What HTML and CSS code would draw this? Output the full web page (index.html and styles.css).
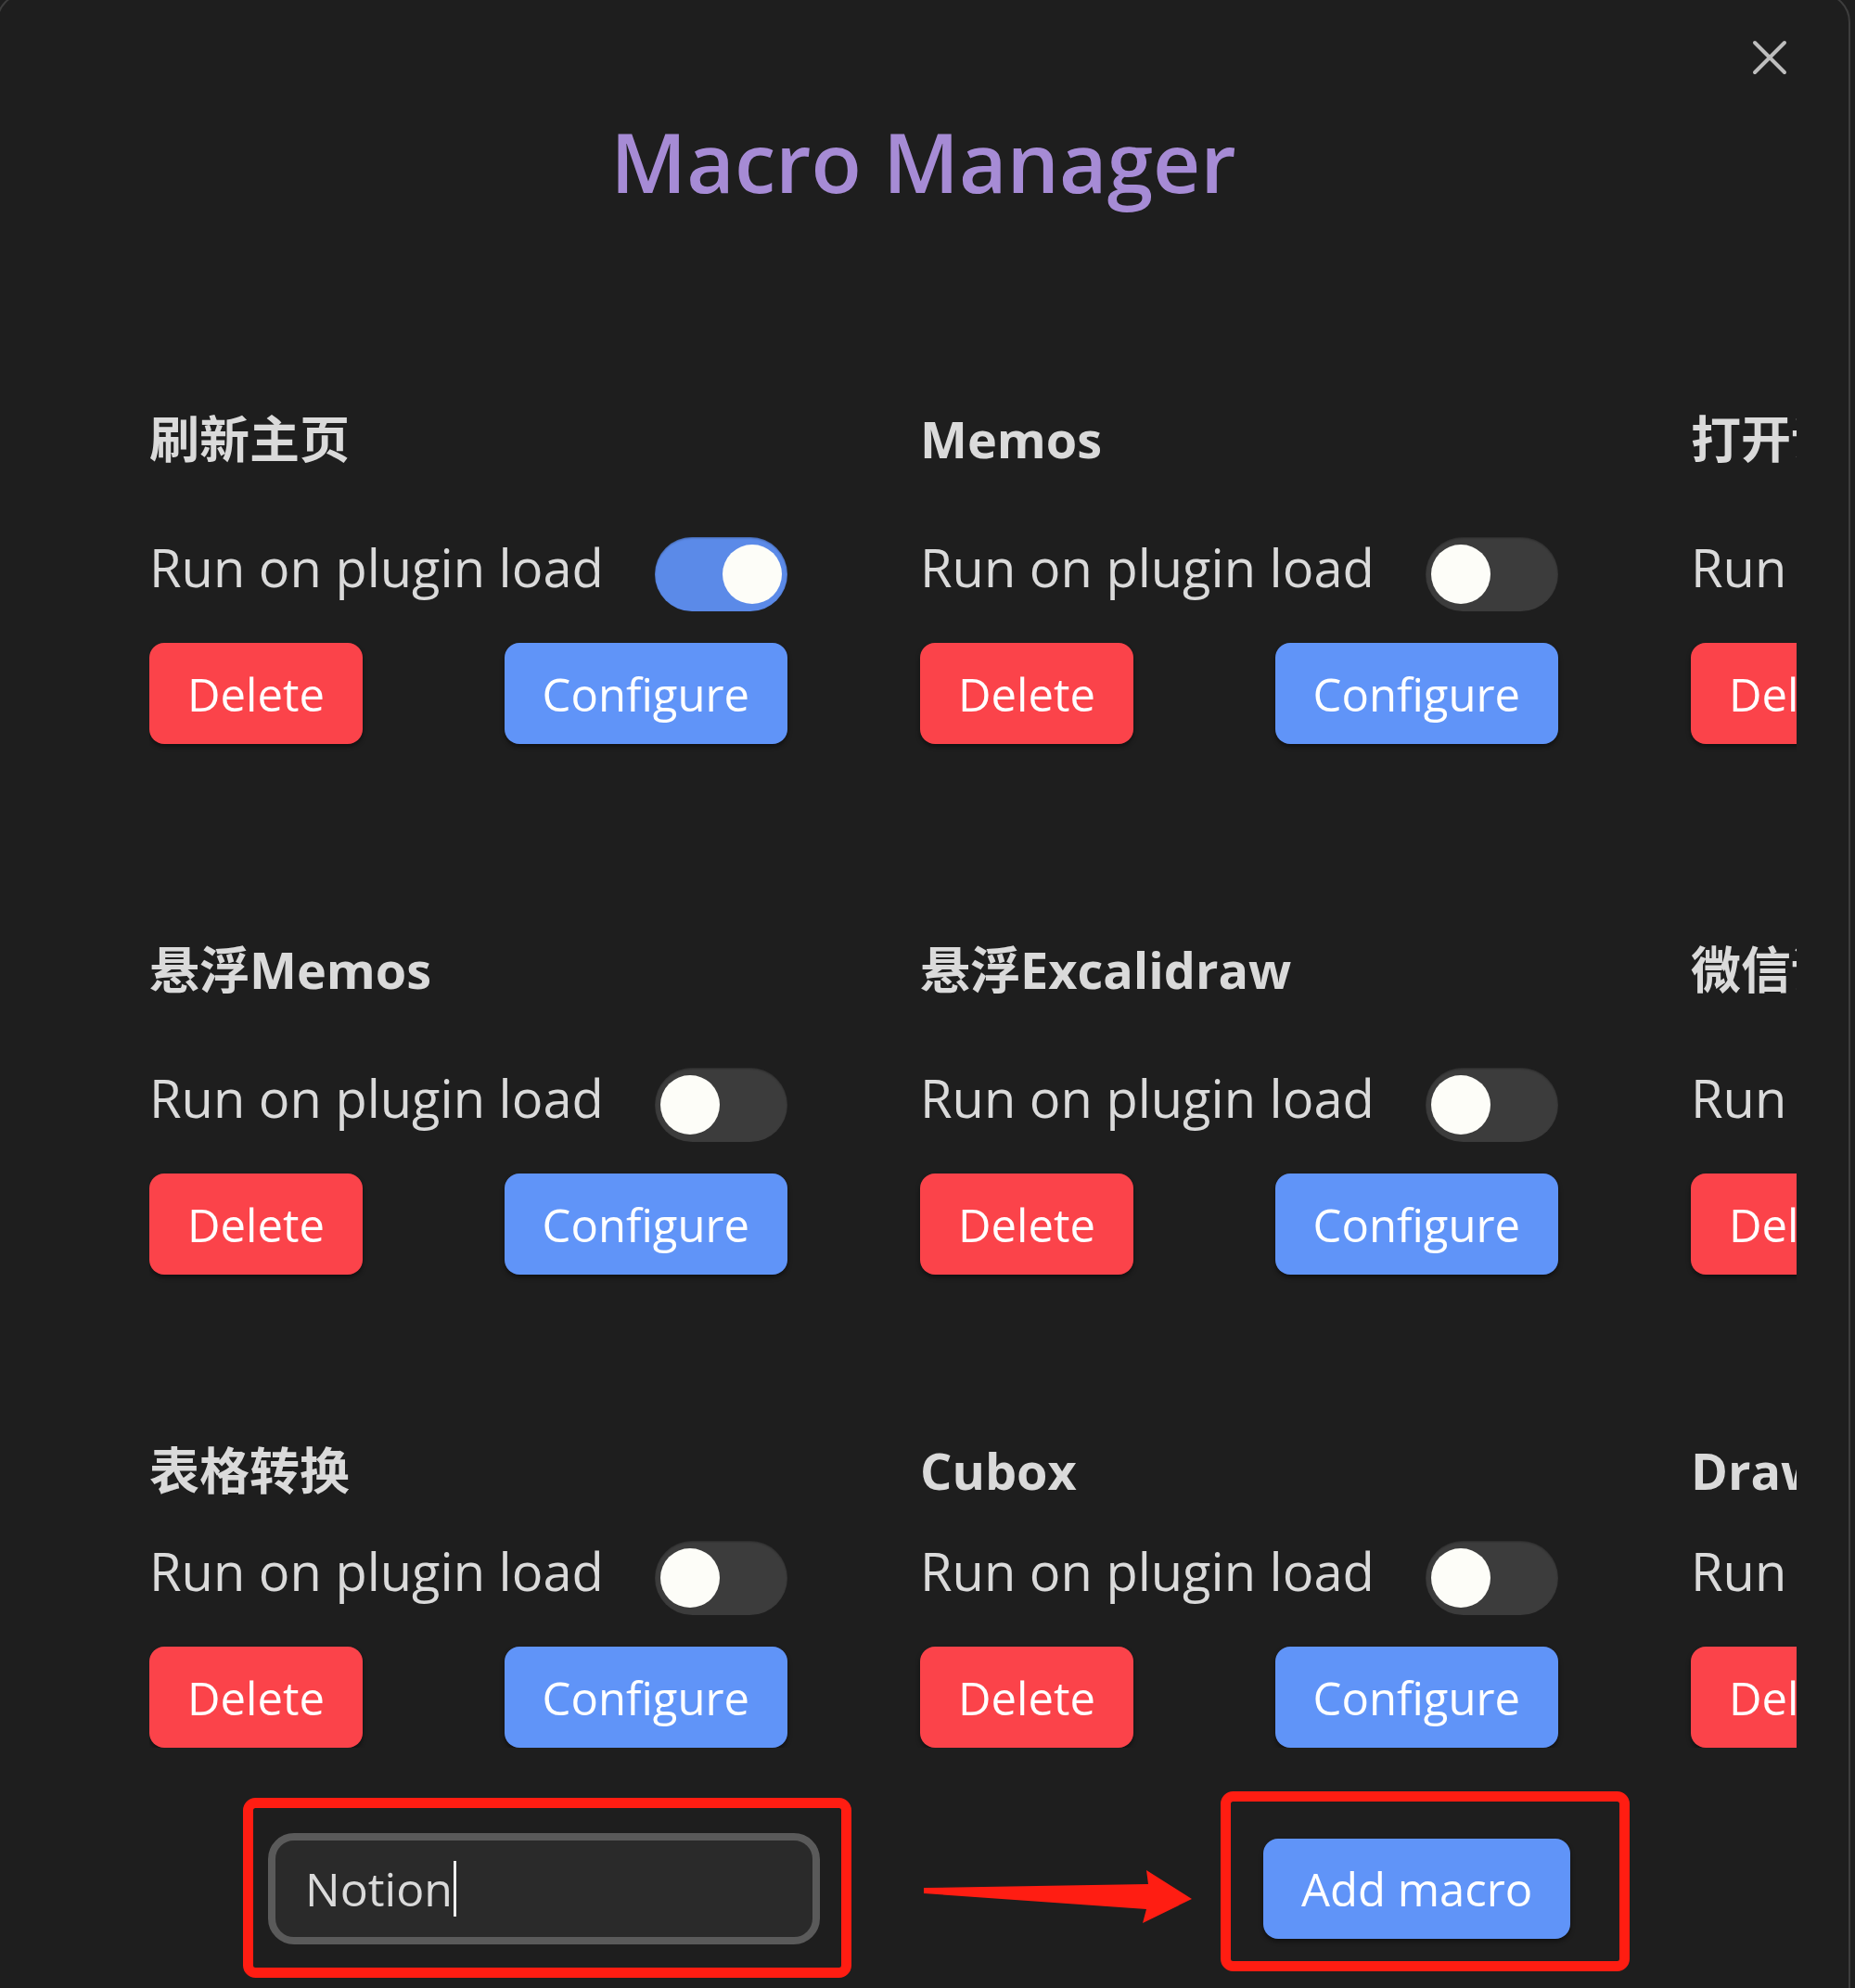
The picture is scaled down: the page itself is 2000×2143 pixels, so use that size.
FILE: index.html
```html
<!DOCTYPE html>
<html lang="zh-CN">
<head>
    <meta charset="UTF-8">
    <meta name="viewport" content="width=device-width, initial-scale=1.0">
    <title>Macro Manager</title>
    <link rel="stylesheet" href="styles.css">
</head>
<body>
    <div class="modal">
        <button class="modal-close" aria-label="Close">
            <svg width="38" height="38" viewBox="0 0 38 38">
                <path d="M3 3 L35 35 M35 3 L3 35" stroke="#bdbdbd" stroke-width="4" stroke-linecap="round" fill="none"/>
            </svg>
        </button>

        <h1 class="modal-title">Macro Manager</h1>

        <div class="macro-grid">
            <div class="macro-card">
                <div class="macro-name">刷新主页</div>
                <div class="macro-controls">
                    <div class="macro-setting">
                        <span class="macro-label">Run on plugin load</span>
                        <div class="toggle is-on"><div class="toggle-knob"></div></div>
                    </div>
                    <div class="macro-actions">
                        <button class="btn btn-delete">Delete</button>
                        <button class="btn btn-primary">Configure</button>
                    </div>
                </div>
            </div>

            <div class="macro-card">
                <div class="macro-name">Memos</div>
                <div class="macro-controls">
                    <div class="macro-setting">
                        <span class="macro-label">Run on plugin load</span>
                        <div class="toggle"><div class="toggle-knob"></div></div>
                    </div>
                    <div class="macro-actions">
                        <button class="btn btn-delete">Delete</button>
                        <button class="btn btn-primary">Configure</button>
                    </div>
                </div>
            </div>

            <div class="macro-card">
                <div class="macro-name">打开设置</div>
                <div class="macro-controls">
                    <div class="macro-setting">
                        <span class="macro-label">Run on plugin load</span>
                        <div class="toggle"><div class="toggle-knob"></div></div>
                    </div>
                    <div class="macro-actions">
                        <button class="btn btn-delete">Delete</button>
                        <button class="btn btn-primary">Configure</button>
                    </div>
                </div>
            </div>

            <div class="macro-card">
                <div class="macro-name">悬浮Memos</div>
                <div class="macro-controls">
                    <div class="macro-setting">
                        <span class="macro-label">Run on plugin load</span>
                        <div class="toggle"><div class="toggle-knob"></div></div>
                    </div>
                    <div class="macro-actions">
                        <button class="btn btn-delete">Delete</button>
                        <button class="btn btn-primary">Configure</button>
                    </div>
                </div>
            </div>

            <div class="macro-card">
                <div class="macro-name">悬浮Excalidraw</div>
                <div class="macro-controls">
                    <div class="macro-setting">
                        <span class="macro-label">Run on plugin load</span>
                        <div class="toggle"><div class="toggle-knob"></div></div>
                    </div>
                    <div class="macro-actions">
                        <button class="btn btn-delete">Delete</button>
                        <button class="btn btn-primary">Configure</button>
                    </div>
                </div>
            </div>

            <div class="macro-card">
                <div class="macro-name">微信读书</div>
                <div class="macro-controls">
                    <div class="macro-setting">
                        <span class="macro-label">Run on plugin load</span>
                        <div class="toggle"><div class="toggle-knob"></div></div>
                    </div>
                    <div class="macro-actions">
                        <button class="btn btn-delete">Delete</button>
                        <button class="btn btn-primary">Configure</button>
                    </div>
                </div>
            </div>

            <div class="macro-card">
                <div class="macro-name">表格转换</div>
                <div class="macro-controls">
                    <div class="macro-setting">
                        <span class="macro-label">Run on plugin load</span>
                        <div class="toggle"><div class="toggle-knob"></div></div>
                    </div>
                    <div class="macro-actions">
                        <button class="btn btn-delete">Delete</button>
                        <button class="btn btn-primary">Configure</button>
                    </div>
                </div>
            </div>

            <div class="macro-card">
                <div class="macro-name">Cubox</div>
                <div class="macro-controls">
                    <div class="macro-setting">
                        <span class="macro-label">Run on plugin load</span>
                        <div class="toggle"><div class="toggle-knob"></div></div>
                    </div>
                    <div class="macro-actions">
                        <button class="btn btn-delete">Delete</button>
                        <button class="btn btn-primary">Configure</button>
                    </div>
                </div>
            </div>

            <div class="macro-card">
                <div class="macro-name">Drawio</div>
                <div class="macro-controls">
                    <div class="macro-setting">
                        <span class="macro-label">Run on plugin load</span>
                        <div class="toggle"><div class="toggle-knob"></div></div>
                    </div>
                    <div class="macro-actions">
                        <button class="btn btn-delete">Delete</button>
                        <button class="btn btn-primary">Configure</button>
                    </div>
                </div>
            </div>
        </div>

        <div class="add-row">
            <div class="text-input"><span>Notion</span><span class="caret"></span></div>
            <button class="btn btn-primary btn-add">Add macro</button>
        </div>

        <!-- red annotation marks drawn over the screenshot -->
        <svg class="annotations" width="2000" height="2143" viewBox="0 0 2000 2143">
            <rect x="267.5" y="1943.5" width="645" height="183" rx="8" fill="none" stroke="#ff1d12" stroke-width="11"/>
            <rect x="1321.5" y="1936.5" width="430" height="183" rx="8" fill="none" stroke="#ff1d12" stroke-width="11"/>
            <polygon points="996,2035 1238,2031 1236,2016 1285,2047 1232,2073 1236,2058 996,2041" fill="#ff1d12"/>
        </svg>
    </div>
</body>
</html>
```

FILE: styles.css
```css
body {
    margin: 0;
    background: #1e1e1e;
    font-family: "Open Sans", "Noto Sans CJK SC", sans-serif;
    color: #dadada;
    overflow: hidden;
}
.modal {
    position: relative;
    box-sizing: border-box;
    width: 1999px;
    height: 2200px;
    margin: -8px 0 0 -4px;
    background: #1e1e1e;
    border: 2px solid #3d3d3d;
    border-radius: 32px;
}
.modal-close {
    position: absolute;
    top: 49px;
    right: 66px;
    width: 38px;
    height: 38px;
    padding: 0;
    border: none;
    background: none;
}
.modal-close svg {
    display: block;
}
.modal-title {
    margin: 0;
    padding-top: 125px;
    font-size: 89px;
    line-height: 110px;
    font-weight: 600;
    text-align: center;
    color: #a68bd5;
}
.macro-grid {
    display: grid;
    grid-template-columns: repeat(3, 688px);
    grid-template-rows: 572px 540px 328px;
    column-gap: 143px;
    width: 1776px;
    margin: 215px 0 0 163px;
    overflow: hidden;
}
.macro-card {
    display: flex;
    flex-direction: column;
    height: 100%;
    max-height: 358px;
}
.macro-name {
    font-size: 54px;
    line-height: 58px;
    font-weight: 700;
}
.macro-controls {
    margin-top: auto;
}
.macro-setting {
    display: flex;
    align-items: center;
    justify-content: space-between;
    height: 80px;
    font-size: 56px;
    margin-bottom: 34px;
}
.macro-label {
    padding-bottom: 16px;
}
.toggle {
    box-sizing: border-box;
    display: flex;
    align-items: center;
    width: 143px;
    height: 80px;
    padding: 0 6px;
    border-radius: 40px;
    background: #3c3c3c;
    box-shadow: inset 0 1px 2px rgba(0,0,0,0.3);
}
.toggle.is-on {
    justify-content: flex-end;
    background: #5b8ae8;
}
.toggle-knob {
    width: 64px;
    height: 64px;
    border-radius: 50%;
    background: #fdfdf8;
}
.macro-actions {
    display: flex;
    justify-content: space-between;
}
.btn {
    height: 109px;
    padding: 0 41px;
    border: none;
    border-radius: 16px;
    font-family: inherit;
    font-size: 49px;
    font-weight: 500;
    color: #fff;
    box-shadow: 0 3px 5px rgba(0,0,0,0.45);
}
.btn-delete {
    background: #fb434a;
}
.btn-primary {
    background: #6094f8;
}
.add-row {
    display: flex;
    align-items: center;
    gap: 478px;
    margin: 92px 0 0 291px;
}
.text-input {
    box-sizing: border-box;
    display: flex;
    align-items: center;
    width: 595px;
    height: 120px;
    padding-left: 32px;
    border: 8px solid #5a5a5a;
    border-radius: 28px;
    background: #2a2a2a;
    font-size: 50px;
    color: #dadada;
}
.caret {
    display: inline-block;
    width: 3px;
    height: 60px;
    margin-left: 1px;
    background: #eee;
}
.btn-add {
    height: 108px;
}
.annotations {
    position: absolute;
    left: 2px;
    top: 6px;
    pointer-events: none;
}
```
